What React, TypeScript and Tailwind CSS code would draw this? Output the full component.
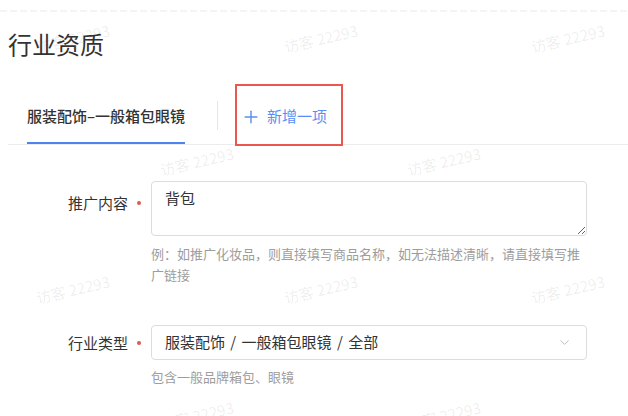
import { ChevronDown, Plus } from "lucide-react";

const marks = [
    "left-[73px] top-[39px]",
    "left-[321px] top-[39px]",
    "left-[568px] top-[39px]",
    "left-[197px] top-[162px]",
    "left-[444px] top-[162px]",
    "left-[73px] top-[290px]",
    "left-[321px] top-[290px]",
    "left-[568px] top-[290px]",
    "left-[197px] top-[416px]",
    "left-[444px] top-[416px]",
];

// full-width punctuation, as the reference draws it
const Hint = ({ text }: { text: string }) => (
    <>
        {text.split(/([：，、])/).map((part, i) =>
            /^[：，、]$/.test(part) ? (
                <span key={i} className="inline-block w-[1em]">
                    {part}
                </span>
            ) : (
                part
            )
        )}
    </>
);

const Label = ({ text }: { text: string }) => (
    <div className="w-[151px] shrink-0 flex justify-end items-center pr-[10px] h-[22px] text-[15px] text-[#333]">
        <span>{text}</span>
        <span className="ml-[9px] w-[4px] h-[4px] rounded-full bg-[#e5574f]" />
    </div>
);

export default function App() {
    return (
        <div
            lang="zh-CN"
            className="relative w-[628px] h-[416px] overflow-hidden bg-white font-['Noto_Sans_CJK_SC',sans-serif]"
        >
            <div className="pt-[10px]">
                <div className="h-[2px] bg-[repeating-linear-gradient(90deg,#f4f4f4_0_7px,transparent_7px_10px)]" />
            </div>

            <h1 className="mt-[16px] pl-[8px] text-[24px] leading-[32px] text-[#333]">行业资质</h1>

            <div className="mt-[24px] ml-[8px] h-[61px] flex items-start border-b border-[#ececec]">
                <div className="ml-[19px] h-[60px] flex items-center pt-[6px] border-b-2 border-[#4d83ef] text-[15px] font-medium text-[#333]">
                    服装配饰–一般箱包眼镜
                </div>
                <div className="ml-[32px] mt-[17px] w-px h-[29px] bg-[#e6e6e6]" />
                <div className="ml-[17px] w-[108px] h-[62px] shrink-0 border-2 border-[#e9574e] flex items-center pl-[4px] pt-[3px] text-[15px] text-[#5a8ef2]">
                    <Plus size={20} strokeWidth={1.7} />
                    <span className="ml-[6px]">新增一项</span>
                </div>
            </div>

            <div className="mt-[36px] flex">
                <div className="pt-[11px]">
                    <Label text="推广内容" />
                </div>
                <div className="w-[436px]">
                    <textarea
                        readOnly
                        defaultValue="背包"
                        className="block w-[436px] h-[55px] border border-[#dcdcdc] rounded-[4px] px-[13px] pt-[5px] text-[15px] leading-[22px] text-[#333] outline-none"
                    />
                    <p className="mt-[7px] text-[13px] leading-[21px] text-[#9d9d9d] whitespace-nowrap">
                        <Hint text="例：如推广化妆品，则直接填写商品名称，如无法描述清晰，请直接填写推" />
                        <br />
                        广链接
                    </p>
                </div>
            </div>

            <div className="mt-[40px] flex">
                <div className="pt-[7px]">
                    <Label text="行业类型" />
                </div>
                <div className="w-[436px]">
                    <div className="h-[35px] border border-[#dcdcdc] rounded-[4px] flex items-center justify-between pl-[13px] pr-[14px] text-[15px] text-[#333]">
                        <span className="[word-spacing:2px]">服装配饰 / 一般箱包眼镜 / 全部</span>
                        <ChevronDown size={15} strokeWidth={1.3} className="text-[#b0b0b0]" />
                    </div>
                    <p className="pt-[6px] text-[13px] leading-[21px] text-[#9d9d9d]">
                        <Hint text="包含一般品牌箱包、眼镜" />
                    </p>
                </div>
            </div>

            {marks.map((m, i) => (
                <span
                    key={i}
                    className={`pointer-events-none absolute ${m} -translate-x-1/2 -translate-y-1/2 rotate-[-13deg] whitespace-nowrap text-[15px] text-black/[0.08]`}
                >
                    访客 22293
                </span>
            ))}
        </div>
    );
}
